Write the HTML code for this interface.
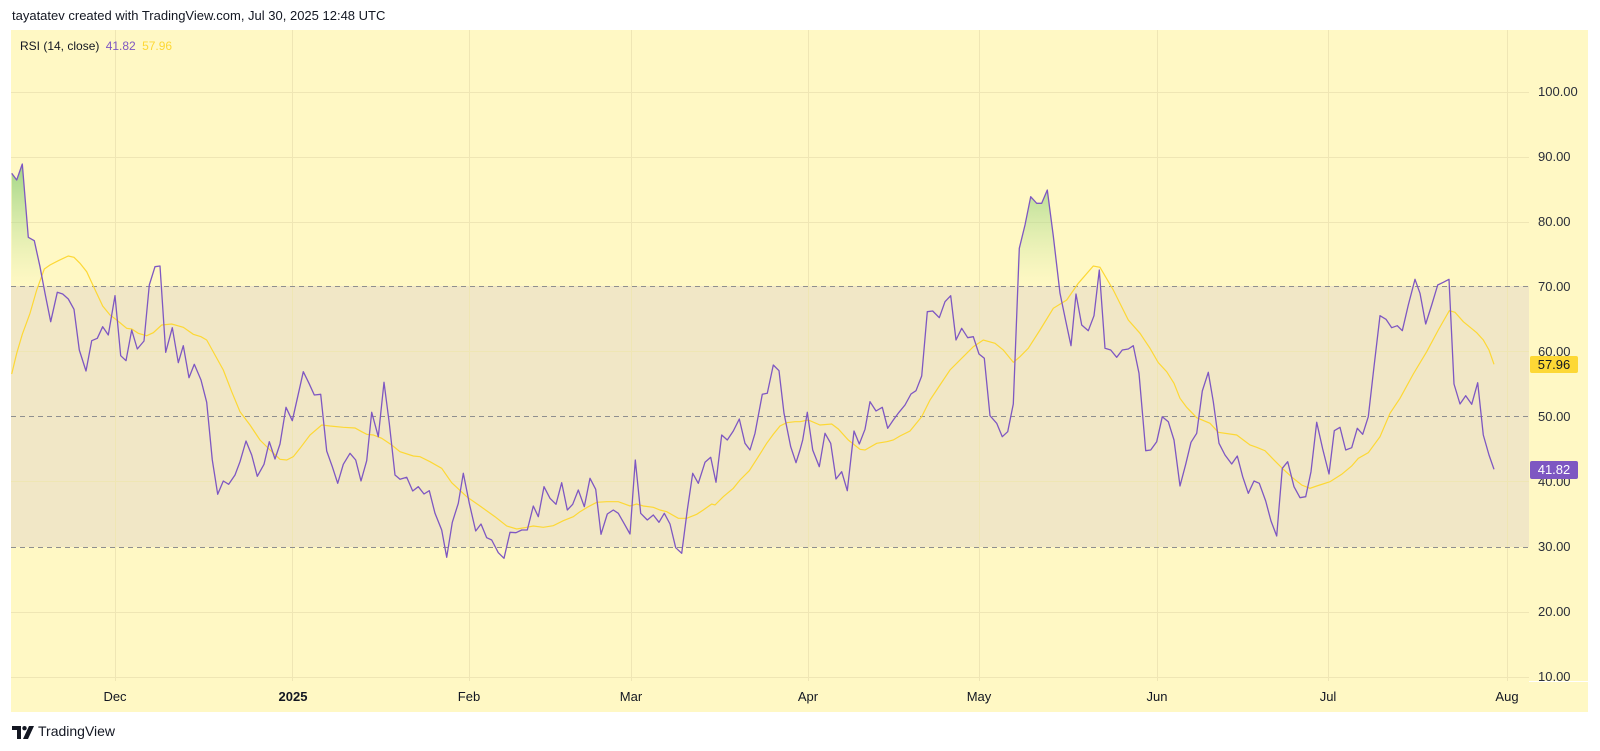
<!DOCTYPE html>
<html><head><meta charset="utf-8"><style>
body{margin:0;width:1600px;height:751px;background:#fff;overflow:hidden;font-family:"Liberation Sans",sans-serif;position:relative}
.t{position:absolute;white-space:nowrap}
.pl{position:absolute;left:1538px;font-size:13px;color:#2a2e39}
.tl{position:absolute;top:689px;font-size:13px;color:#131722;transform:translateX(-50%)}
</style></head><body>
<div class="t" style="left:12px;top:8px;font-size:13px;color:#131722">tayatatev created with TradingView.com, Jul 30, 2025 12:48 UTC</div>
<div style="position:absolute;left:11px;top:30px;width:1577px;height:682px;background:#fff8c4"></div>
<svg style="position:absolute;left:0;top:0" width="1600" height="751">
<defs>
<linearGradient id="g" gradientUnits="userSpaceOnUse" x1="0" y1="160" x2="0" y2="286">
<stop offset="0" stop-color="#8fcf7a" stop-opacity="0.9"/><stop offset="1" stop-color="#c8e6a0" stop-opacity="0"/></linearGradient>
<clipPath id="c"><rect x="11" y="30" width="1520" height="256"/></clipPath>
</defs>
<rect x="11" y="286" width="1518" height="261" fill="#f1e7c6"/>
<g stroke="#efe6b4" stroke-width="1">
<line x1="11" x2="1529" y1="92.5" y2="92.5"/><line x1="11" x2="1529" y1="157.5" y2="157.5"/><line x1="11" x2="1529" y1="222.5" y2="222.5"/><line x1="11" x2="1529" y1="351.5" y2="351.5"/><line x1="11" x2="1529" y1="481.5" y2="481.5"/><line x1="11" x2="1529" y1="612.5" y2="612.5"/><line x1="11" x2="1529" y1="677.5" y2="677.5"/>
<line x1="115.5" x2="115.5" y1="30" y2="681"/><line x1="292.5" x2="292.5" y1="30" y2="681"/><line x1="469.5" x2="469.5" y1="30" y2="681"/><line x1="631.5" x2="631.5" y1="30" y2="681"/><line x1="808.5" x2="808.5" y1="30" y2="681"/><line x1="979.5" x2="979.5" y1="30" y2="681"/><line x1="1157.5" x2="1157.5" y1="30" y2="681"/><line x1="1328.5" x2="1328.5" y1="30" y2="681"/><line x1="1507.5" x2="1507.5" y1="30" y2="681"/>
</g>
<g stroke="#8f8f8f" stroke-width="1" stroke-dasharray="5,4">
<line x1="11" x2="1529" y1="286.5" y2="286.5"/><line x1="11" x2="1529" y1="416.5" y2="416.5"/><line x1="11" x2="1529" y1="547.5" y2="547.5"/>
</g>
<line x1="1529" x2="1588" y1="681.5" y2="681.5" stroke="#fff"/>
<g clip-path="url(#c)"><path fill="url(#g)" d="M11.7,286 L11.7,173.3 16.7,180 22.3,164 28.3,237.3 34.3,240.7 40,266.7 45,293.3 50.7,321.7 L50.7,286 Z M1013.3,286 L1019.3,248.3 1025,225 1030.7,196.7 1036.7,203.3 1041.7,203.3 1047.3,190 1053.3,236 1060,293.3 L1060,286 Z"/></g>
<polyline fill="none" stroke="#fdd835" stroke-width="1.2" points="11.7,374 16.7,353.3 22.3,334.3 30,313.3 36.7,290 44.3,269 50,265 58.3,260.7 68.3,256 74,257.3 80,263.3 86.7,271.7 93.3,286 102.7,306 110,315 116.7,320 126.7,328.3 131.7,329 138.3,333.3 146.7,335.7 153.3,332.7 161.7,325 171.7,324 183.3,327.3 193.3,334.3 201,336.7 206.7,340 215,355 223.3,370 231.7,391.7 240,411.7 250,425 260,440 270,450 280,459.3 286.7,460 293.3,456.7 300,448.3 310,435 321.7,425 330,426 343.3,427.3 355,428 361.7,431.7 366.7,434.3 373.3,435 381.7,438.3 391.7,445 400,451.7 413.3,456 420,456.7 430,461.7 441.7,468.3 451.7,482.7 466.7,496.7 480,506 495,516.7 506.7,526 516.7,529 526.7,527.3 533.3,526 543.3,527.3 553.3,525.7 563.3,520.7 573.3,516.7 580,511.7 588.3,506.7 596.7,502.3 606.7,501.7 618.3,501.7 630,506 636.7,504 643.3,506 653.3,507.3 660,510 666.7,511.7 678.3,518.3 686.7,518.3 696.7,514.3 703.3,510 711.7,504 715,505 723.3,496.7 733.3,488.3 740,480 749.3,470.7 758.3,456.7 766.7,443.3 773.3,434.3 780,426 786.7,422.7 795,421.7 800,421.7 808.3,420 820,425 831.7,424 838.3,429 848.3,440 860,449.3 865,450 876.7,443.3 886.7,441.7 893.3,440 900,436 910,431 921.7,416.7 930,400 940,385 950,370 963.3,356.7 973.3,346.7 983.3,340 995,343.3 1003.3,350 1013.3,362.3 1020,356.7 1028.3,348.3 1040,330 1053.3,308.3 1066.7,300 1078.3,283.3 1093.3,266 1100,267.3 1113.3,290 1128.3,320 1140,333.3 1150,348.3 1158.3,362.7 1166.7,371.7 1174,383.3 1180,398.3 1186.7,407.3 1196.7,417.7 1210,423.3 1218.3,432.3 1236.7,435 1250,445 1256.7,447.3 1265,450.7 1273.3,459.3 1283.3,469.3 1293.3,478.3 1301.7,485 1310,488.3 1316.7,486 1330,481.7 1341.7,474.3 1351.7,466 1358.3,458.3 1368.3,452.7 1380,436.7 1390,413.3 1400,398.3 1413.3,374 1426.7,351.7 1438.3,330 1449.3,310.7 1455,312.3 1463.3,321.7 1476.7,332.7 1483.3,340 1489,350 1494,364.3"/>
<polyline fill="none" stroke="#7e57c2" stroke-width="1.3" stroke-linejoin="round" points="11.7,173.3 16.7,180 22.3,164 28.3,237.3 34.3,240.7 40,266.7 45,293.3 50.7,321.7 57.3,292.3 62.7,294 68.3,299 74,309.3 79.3,350 86,371 91.7,340.7 97.3,338.3 102.7,326.7 108.3,335 115,295.7 120.7,355.7 126,360.7 131.7,330 137.3,349 144,341 149.3,285 155,266.7 160,266 165.7,352.3 172.3,327.7 178.3,362.7 183.3,345.7 189,377.7 194.3,364.3 201,380 206.7,402.3 212.3,460 217.7,494.3 223.3,481 228.7,484.3 235,475 240,461.7 246,441 251.7,455 257.3,476.3 264,464.3 269.3,441.7 275,459 280,444 286,407.3 292.3,420.7 297.7,396.7 303.3,371.7 309,383.3 314.3,395 320.7,394.3 326.7,451 332.3,466.7 337.7,483.3 343.3,464.3 350,453.3 355.7,460 361,481 366.7,460.7 371.7,412.3 378.3,436.7 384,382.3 389.3,423.3 395,475 400,479.3 406.7,477.3 412.7,491 418.3,486.7 424,494 429.3,490.7 435,513.3 441.7,530 446.7,557.3 452.3,522.3 458.3,503.3 463.3,473.3 469.3,503.3 475.7,531 481,524 486.7,537.7 491.7,540 498.3,552.7 504,558.3 510,532.3 516,532.7 521.7,530 527.3,530 533.3,506 538.3,516.7 544,486.7 550,498.3 556,504.3 561.7,482.7 567.3,510 572.7,504.3 578.3,490 584.3,506.7 590,478.3 595.7,489.3 601,534.3 607.3,514 613.3,510 618.3,513.3 624,523.3 630,534 635.3,460 640.7,513.3 647.3,520 653.3,515 659,522.3 664.3,513.3 670,524 675.7,547.7 681.7,553.3 687.3,510 692.7,473.3 698.3,483.3 705,462.3 710.7,457.3 716,482.3 721.7,435 727.3,440 733.3,431 739.3,419 745,443.3 750,450 755,433.3 762.3,394.3 767.3,393.3 773.3,365 779,370.7 784,413.3 790.7,446.7 796,462.7 800,450 802.7,440 807.3,412.3 812.7,450 819.3,466.7 825,433.3 830.7,443.3 836,479 841.7,471.7 847.3,490.7 854,431 859.3,444 865,429.3 870,401.7 876,411 882.3,407.3 887.7,428.3 893.3,420 899,412.3 905,405 911,394 916,390.7 921.7,376 927.3,311.7 932.7,311 939.3,317.7 945,301.7 950.7,295.7 956,340 961.7,328.3 967.7,337.7 973.3,336.7 979,354 984.3,358.3 990,415.7 996.7,423.3 1002.3,436.7 1007.7,431.7 1013.3,404 1019.3,248.3 1025,225 1030.7,196.7 1036.7,203.3 1041.7,203.3 1047.3,190 1053.3,236 1060,293.3 1065.7,320.7 1071,345.7 1076,294 1081.7,325 1088.3,330.7 1094,315.7 1099.3,270 1105,348.3 1110.7,350 1116.7,357.3 1122.3,350 1128.3,349 1133.3,345.7 1139,373.3 1145.7,450.7 1150.7,450 1156.7,441.7 1162.3,416.7 1168.3,421.7 1174,440 1180,486 1185.7,464.3 1191,442.3 1196.7,433.3 1202.3,391 1208.3,372.3 1213.3,401.7 1219,443.3 1225,455 1231.7,464 1237.3,456 1242.7,476.7 1248.3,493.3 1254,481 1259.3,483.3 1265.7,501 1271,521 1276.7,536 1282.3,468.3 1287.7,461.7 1294,486.7 1300,497.7 1305.7,496.7 1311,471.7 1316.7,422.3 1322.7,449 1329,474 1334.3,430.7 1340,427.3 1345.7,450 1351.7,447.7 1357.3,428.3 1362.7,434.3 1368.3,416.7 1374,366.7 1380,315.7 1386,319.3 1391.7,327.7 1397.3,325.7 1402.3,330.7 1408.3,305 1415,279.3 1420,293.3 1425.7,324 1431.7,305 1437.7,285 1443.3,282.3 1449,279.3 1454,384 1460,404 1465.7,395.7 1471.7,404.3 1477.7,382.7 1483.3,435 1489,455 1494,469.3"/>
</svg>
<div class="t" style="left:20px;top:39px;font-size:12px;color:#131722">RSI (14, close) <span style="color:#7e57c2;margin-left:3px">41.82</span> <span style="color:#fdd835;margin-left:3px">57.96</span></div>
<div class="pl" style="top:84px">100.00</div>
<div class="pl" style="top:149px">90.00</div>
<div class="pl" style="top:214px">80.00</div>
<div class="pl" style="top:279px">70.00</div>
<div class="pl" style="top:344px">60.00</div>
<div class="pl" style="top:409px">50.00</div>
<div class="pl" style="top:474px">40.00</div>
<div class="pl" style="top:539px">30.00</div>
<div class="pl" style="top:604px">20.00</div>
<div class="pl" style="top:669px;height:12px;overflow:hidden">10.00</div>
<div class="t" style="left:1530px;top:356px;width:48px;height:17px;background:#fdd835;border-radius:2px;font-size:13px;color:#131722;text-align:center;line-height:17px">57.96</div>
<div class="t" style="left:1530px;top:461px;width:48px;height:18px;background:#7e57c2;border-radius:2px;font-size:13px;color:#fff;text-align:center;line-height:18px">41.82</div>
<div class="tl" style="left:115px">Dec</div>
<div class="tl" style="left:293px;font-weight:bold">2025</div>
<div class="tl" style="left:469px">Feb</div>
<div class="tl" style="left:631px">Mar</div>
<div class="tl" style="left:808px">Apr</div>
<div class="tl" style="left:979px">May</div>
<div class="tl" style="left:1157px">Jun</div>
<div class="tl" style="left:1328px">Jul</div>
<div class="tl" style="left:1507px">Aug</div>
<svg style="position:absolute;left:12px;top:726px" width="24" height="13" viewBox="0 0 24 13"><path d="M0,0H9V13H5V4H0Z" fill="#131722"/><circle cx="12.5" cy="2.2" r="2.2" fill="#131722"/><path d="M17,0H22L16,13H11Z" fill="#131722"/></svg>
<div class="t" style="left:38px;top:723px;font-size:14px;color:#131722">TradingView</div>
</body></html>
